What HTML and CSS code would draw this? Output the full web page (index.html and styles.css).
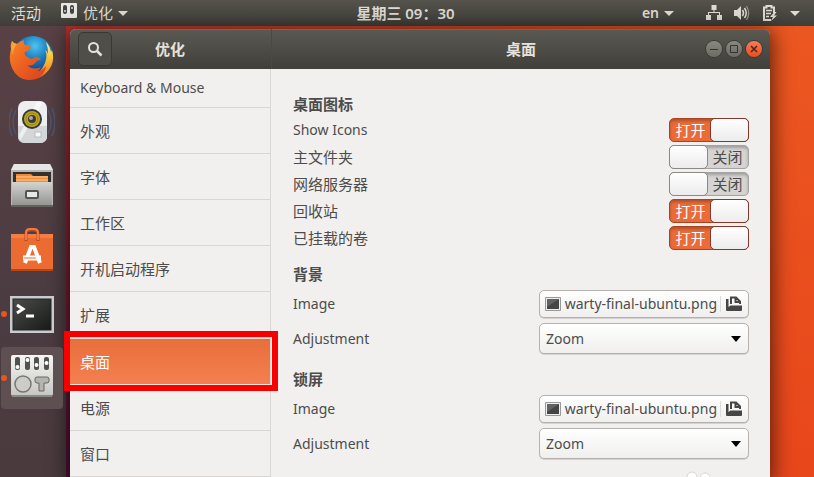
FILE: index.html
```html
<!DOCTYPE html>
<html lang="zh-CN">
<head>
    <meta charset="UTF-8">
    <meta name="viewport" content="width=device-width, initial-scale=1.0">
    <title>优化</title>
    <link rel="stylesheet" href="styles.css">
</head>
<body>
    <!-- top panel -->
    <header class="panel">
        <div class="panel-left">
            <button type="button" class="panel-item">活动</button>
            <button type="button" class="panel-item">
                <svg class="app-icon" width="17" height="17" viewBox="0 0 17 17">
                    <rect x="0" y="0" width="16" height="15" rx="1" fill="#e8e8e3"/>
                    <rect x="2" y="2" width="4" height="9" rx="2" fill="#444"/>
                    <rect x="9" y="2" width="4" height="9" rx="2" fill="#444"/>
                    <circle cx="4" cy="8" r="1" fill="#ddd"/>
                    <circle cx="11" cy="5" r="1" fill="#ddd"/>
                </svg>
                优化
                <span class="caret"></span>
            </button>
        </div>
        <button type="button" class="panel-item clock">星期三 09：30</button>
        <div class="panel-right">
            <button type="button" class="panel-item lang">en <span class="caret"></span></button>
            <button type="button" class="panel-item tray" aria-label="系统">
                <svg width="16" height="16" viewBox="0 0 16 16" fill="#dfdbd2">
                    <path d="M5.500 0h5v5H8.500v2H14v3h2v5h-5v-5h2V8H3v2h2v5H0v-5h2V7h5.500V5h-2z"/>
                </svg>
                <svg width="16" height="16" viewBox="0 0 16 16">
                    <path d="M0 5h3l4-4v14l-4-4H0z" fill="#dfdbd2"/>
                    <path d="M8.500 5q2 3 0 6M10.500 3q3.500 5 0 10" fill="none" stroke="#dfdbd2" stroke-width="1.500"/>
                    <path d="M12.500 1q4.500 7 0 14" fill="none" stroke="#97948c" stroke-width="1.200"/>
                </svg>
                <svg width="16" height="16" viewBox="0 0 16 16">
                    <path d="M9 15H2V2.500h2.500V1h5v1.500H12V8" fill="none" stroke="#dfdbd2" stroke-width="2"/>
                    <path d="M4 5.500h6M4 8.500h5M4 11.500h3" stroke="#dfdbd2" stroke-width="1.500"/>
                    <path d="M12.500 7L8 12h3l-2 4 6-5.500h-3L14.500 7z" fill="#dfdbd2"/>
                </svg>
                <span class="caret"></span>
            </button>
        </div>
    </header>

    <div class="desktop">
        <nav class="dock">
            <button type="button" class="dock-item" aria-label="Firefox">
                <svg width="46" height="46" viewBox="0 0 46 46">
                    <defs>
                        <radialGradient id="globe" cx=".55" cy=".25" r=".7"><stop offset="0" stop-color="#4fc4ef"/><stop offset=".5" stop-color="#1779bd"/><stop offset="1" stop-color="#103d7b"/></radialGradient>
                        <linearGradient id="fox" x1="0" y1="0" x2="1" y2="1"><stop offset="0" stop-color="#f58a25"/><stop offset=".5" stop-color="#ec5f21"/><stop offset="1" stop-color="#d9401c"/></linearGradient>
                        <linearGradient id="tail" x1="0" y1="0" x2="0" y2="1"><stop offset="0" stop-color="#fff0a0"/><stop offset=".4" stop-color="#fbc638"/><stop offset="1" stop-color="#ed6b20"/></linearGradient>
                    </defs>
                    <circle cx="24" cy="21" r="20" fill="url(#globe)"/>
                    <path d="M37 7q4 4 5 10l1-2q4 14-6 23-7 7-17 6 12-6 16-16 3-8 0-13 2 1 3 4 0-7-2-12z" fill="url(#tail)"/>
                    <path d="M3 6q2 3 5 3 3-3 7-4-1 3 1 5l5 1q2 2-1 4l-4 2q-1 2 1 4l5 3 5-2q4 0 5 3-4 0-5 2-4 5-9 3 6 6 14 2-1 3-4 4 5 0 9-5-2 14-18 14Q8 44 3 33-1 24 2 14q-1-4 1-8z" fill="url(#fox)"/>
                    <path d="M3 6q2 3 5 3-4 4-4 11-3-6-1-14z" fill="#f7a53a"/>
                </svg>
            </button>
            <button type="button" class="dock-item" aria-label="Rhythmbox">
                <svg width="46" height="46" viewBox="0 0 46 46">
                    <g fill="none" stroke="#4d5d83" stroke-width="1.500" opacity=".65"><path d="M7 11q-6 12 0 24M3 9q-6 14 0 28M39 11q6 12 0 24M43 9q6 14 0 28"/></g>
                    <rect x="9" y="2" width="29" height="42" rx="7" fill="#eceeef"/>
                    <path d="M9 27h29v10q0 7-7 7H16q-7 0-7-7z" fill="#d4d7da"/>
                    <path d="M10 36L28 3h6L11 42z" fill="#fff" opacity=".6"/>
                    <circle cx="23" cy="20" r="10" fill="#363736"/>
                    <circle cx="23" cy="20" r="8" fill="#c3a81d"/>
                    <circle cx="23" cy="20" r="6" fill="none" stroke="#927c17"/>
                    <circle cx="23" cy="20" r="4" fill="#393a3a"/>
                    <circle cx="22" cy="19" r="2" fill="#a9abaa"/>
                    <rect x="26" y="33" width="6" height="5" fill="#f8f8f8" stroke="#b9bcbf"/>
                </svg>
            </button>
            <button type="button" class="dock-item" aria-label="文件">
                <svg width="46" height="46" viewBox="0 -1 46 46">
                    <defs><linearGradient id="drawer" x2="0" y2="1"><stop offset="0" stop-color="#d3d3d1"/><stop offset="1" stop-color="#92928f"/></linearGradient></defs>
                    <path d="M5 0h36l3 6v36H2V6z" fill="#b9b9b7"/>
                    <path d="M5 0h36l3 6H2z" fill="#e6e6e4"/>
                    <rect x="4" y="8" width="38" height="11" fill="#36302c"/>
                    <path d="M7 10h15l2 2h15v7H7z" fill="#f08a3b"/>
                    <path d="M7 13h32M7 16h32" stroke="#ffd09a"/>
                    <path d="M3 18h40v24H3z" fill="url(#drawer)"/>
                    <path d="M2 42h42" stroke="#64605d" stroke-width="2"/>
                    <rect x="17" y="27" width="12" height="7" rx="1" fill="#e8e8e6" stroke="#555" stroke-width="2"/>
                </svg>
            </button>
            <button type="button" class="dock-item" aria-label="Ubuntu 软件">
                <svg width="46" height="46" viewBox="0 0 46 46">
                    <path d="M2 7h42v36H2z" fill="#ec6b31"/>
                    <path d="M2 7h42v4H2z" fill="#f37f45"/>
                    <path d="M2 43h42" stroke="#b64518" stroke-width="2"/>
                    <path d="M17 14V7q0-4 4-4h4q4 0 4 4v7" fill="none" stroke="#b94a20" stroke-width="3"/>
                    <path d="M17 13V6q0-4 4-4h4q4 0 4 4v7" fill="none" stroke="#f37b41" stroke-width="2"/>
                    <path d="M16 36l6-16h3l6 16" fill="none" stroke="#fff" stroke-width="4"/>
                    <path d="M14 31h18" stroke="#fff" stroke-width="5"/>
                    <path d="M15 31h12" stroke="#ec6b31"/>
                </svg>
            </button>
            <button type="button" class="dock-item running" aria-label="终端">
                <svg width="46" height="46" viewBox="0 0 46 46">
                    <defs><linearGradient id="screen" x2="1" y2="1"><stop offset="0" stop-color="#4c4d4b"/><stop offset="1" stop-color="#171918"/></linearGradient></defs>
                    <rect x="1" y="5" width="44" height="37" fill="#c9ccce"/>
                    <rect x="4" y="8" width="38" height="31" fill="url(#screen)" stroke="#222"/>
                    <path d="M8 14l6 4-6 4M17 25h8" fill="none" stroke="#fff" stroke-width="3"/>
                </svg>
            </button>
            <button type="button" class="dock-item running current" aria-label="优化">
                <svg width="46" height="46" viewBox="0 0 46 46">
                    <defs><linearGradient id="board" x2="0" y2="1"><stop offset="0" stop-color="#f6f6f3"/><stop offset="1" stop-color="#c6c6c2"/></linearGradient></defs>
                    <rect x="2" y="0" width="42" height="41" rx="2" fill="url(#board)"/>
                    <path d="M3 41h40" stroke="#8b8988" stroke-width="2"/>
                    <g fill="#50524f"><rect x="6" y="2" width="5" height="13" rx="2"/><rect x="16" y="2" width="5" height="13" rx="2"/><rect x="25" y="2" width="5" height="13" rx="2"/><rect x="35" y="2" width="5" height="13" rx="2"/></g>
                    <g fill="#fff"><circle cx="8.500" cy="12" r="2"/><circle cx="18.500" cy="5" r="2"/><circle cx="27.500" cy="10" r="2"/><circle cx="37.500" cy="8" r="2"/></g>
                    <circle cx="14" cy="29" r="8" fill="#ccccc8" stroke="#777875" stroke-width="1.500"/>
                    <path d="M28 22h10q2 0 2 2v2q0 2-2 2h-3v8h-5v-8h-2q-2 0-2-2v-2q0-2 2-2z" fill="#b4b5b2" stroke="#666764"/>
                </svg>
            </button>
        </nav>

        <main class="window">
            <header class="titlebar">
                <div class="title-side">
                    <button type="button" class="search" aria-label="搜索">
                        <svg width="16" height="16" viewBox="0 0 16 16" fill="none" stroke="#e5e2dc"><circle cx="6.500" cy="6.500" r="4.500" stroke-width="2"/><path d="M10 10l4.500 4.500" stroke-width="2.500"/></svg>
                    </button>
                    <h1>优化</h1>
                </div>
                <div class="title-main">
                    <h2>桌面</h2>
                    <div class="controls">
                        <button type="button" class="control" aria-label="最小化"><svg width="16" height="16" viewBox="0 0 16 16"><path d="M4 8.500h8" stroke="#34332e"/></svg></button>
                        <button type="button" class="control" aria-label="最大化"><svg width="16" height="16" viewBox="0 0 16 16"><path d="M4.500 4.500h7v7h-7z" fill="none" stroke="#34332e"/></svg></button>
                        <button type="button" class="control close" aria-label="关闭"><svg width="16" height="16" viewBox="0 0 16 16"><path d="M5 5l6 6M11 5l-6 6" stroke="#47251a" stroke-width="1.500"/></svg></button>
                    </div>
                </div>
            </header>

            <div class="window-body">
                <ul class="sidebar">
                    <li><a href="#">Keyboard &amp; Mouse</a></li>
                    <li><a href="#">外观</a></li>
                    <li><a href="#">字体</a></li>
                    <li><a href="#">工作区</a></li>
                    <li><a href="#">开机启动程序</a></li>
                    <li><a href="#">扩展</a></li>
                    <li class="selected"><a href="#">桌面</a></li>
                    <li><a href="#">电源</a></li>
                    <li><a href="#">窗口</a></li>
                </ul>

                <form class="settings">
                    <section>
                        <h3>桌面图标</h3>
                        <div class="row">
                            <label for="show-icons" class="latin">Show Icons</label>
                            <span class="switch"><input type="checkbox" id="show-icons" checked><span class="state">打开</span><span class="knob"></span></span>
                        </div>
                        <div class="row">
                            <label for="home">主文件夹</label>
                            <span class="switch"><input type="checkbox" id="home"><span class="state">关闭</span><span class="knob"></span></span>
                        </div>
                        <div class="row">
                            <label for="network">网络服务器</label>
                            <span class="switch"><input type="checkbox" id="network"><span class="state">关闭</span><span class="knob"></span></span>
                        </div>
                        <div class="row">
                            <label for="trash">回收站</label>
                            <span class="switch"><input type="checkbox" id="trash" checked><span class="state">打开</span><span class="knob"></span></span>
                        </div>
                        <div class="row">
                            <label for="volumes">已挂载的卷</label>
                            <span class="switch"><input type="checkbox" id="volumes" checked><span class="state">打开</span><span class="knob"></span></span>
                        </div>
                    </section>

                    <section>
                        <h3>背景</h3>
                        <div class="row tall">
                            <label for="bg-image" class="latin">Image</label>
                            <button type="button" class="file" id="bg-image">
                                <svg width="16" height="16" viewBox="0 0 16 16"><path d="M.500 1.500h15v13H.500z" fill="#eee" stroke="#999"/><path d="M2 3h12v10H2z" fill="#454545"/><path d="M2 3h12L2 11z" fill="#626262"/></svg>
                                <span class="file-name">warty-final-ubuntu.png</span>
                                <svg class="open" width="17" height="16" viewBox="0 0 17 16"><path d="M5 8V1.500h5l4 4V8M9.500 1v5H14" fill="none" stroke="#464646" stroke-width="2"/><path d="M0 3h2.500v8L4.500 9.500H16V14q0 1-1 1H1q-1 0-1-1z" fill="#464646"/></svg>
                            </button>
                        </div>
                        <div class="row tall">
                            <label for="bg-adjust" class="latin">Adjustment</label>
                            <select id="bg-adjust"><option>Zoom</option></select>
                        </div>
                    </section>

                    <section>
                        <h3>锁屏</h3>
                        <div class="row tall">
                            <label for="lock-image" class="latin">Image</label>
                            <button type="button" class="file" id="lock-image">
                                <svg width="16" height="16" viewBox="0 0 16 16"><path d="M.500 1.500h15v13H.500z" fill="#eee" stroke="#999"/><path d="M2 3h12v10H2z" fill="#454545"/><path d="M2 3h12L2 11z" fill="#626262"/></svg>
                                <span class="file-name">warty-final-ubuntu.png</span>
                                <svg class="open" width="17" height="16" viewBox="0 0 17 16"><path d="M5 8V1.500h5l4 4V8M9.500 1v5H14" fill="none" stroke="#464646" stroke-width="2"/><path d="M0 3h2.500v8L4.500 9.500H16V14q0 1-1 1H1q-1 0-1-1z" fill="#464646"/></svg>
                            </button>
                        </div>
                        <div class="row tall">
                            <label for="lock-adjust" class="latin">Adjustment</label>
                            <select id="lock-adjust"><option>Zoom</option></select>
                        </div>
                    </section>
                    <svg class="mark" width="28" height="6" viewBox="0 0 28 6"><g fill="#fff" stroke="#d8d6d4"><circle cx="7" cy="6" r="5"/><circle cx="20" cy="7" r="5"/></g></svg>
                </form>
            </div>
        </main>
    </div>
</body>
</html>
```
FILE: styles.css
```css
* { margin: 0; padding: 0; box-sizing: border-box; }
body { display: flex; flex-direction: column; height: 100vh; overflow: hidden; font-family: "Noto Sans", "Noto Sans CJK SC", sans-serif; font-size: 14px; line-height: 20px; color: #4c4c4c; background: #e64a19; }
button, select { font: inherit; color: inherit; border: none; background: none; }
svg { display: block; flex: none; }

/* panel */
.panel { display: grid; grid-template-columns: 1fr auto 1fr; height: 26px; padding: 0 14px 0 11px; color: #dfdbd2; background: linear-gradient(#55534b, #3e3d38); }
.panel-left, .panel-right { display: flex; }
.panel-left { gap: 20px; font-size: 15px; }
.panel-right { justify-content: flex-end; gap: 32px; }
.panel-item { display: flex; align-items: center; gap: 5px; }
.app-icon { align-self: flex-start; margin-top: 3px; }
.clock, .lang { font-weight: 600; }
.panel .clock { font-size: 15px; }
.panel .tray { gap: 12px; }
.caret { width: 0; height: 0; border: 5px solid transparent; border-top-color: #dfdbd2; border-bottom: none; }

/* desktop */
.desktop { flex: 1; display: flex; min-height: 0; background: linear-gradient(transparent, #4d1038) no-repeat 0 0 / 90px 100%, linear-gradient(rgba(240, 95, 35, 0.3), rgba(230, 50, 20, 0.4)), linear-gradient(90deg, #7d1440, #a3202e 10%, #b83420 50%, #e95420 94%); }
.dock { width: 66px; flex: none; padding-top: 1px; background: linear-gradient(#594145, #4b3c41 60%, #4a3a3e); }
.dock-item { position: relative; display: flex; align-items: center; justify-content: center; width: 62px; height: 62px; margin: 0 1px 2px; border-radius: 4px; }
.current { background: #5d4f52; }
.running::before { content: ""; position: absolute; left: 0; top: 28px; width: 6px; height: 6px; border-radius: 50%; background: #e95420; }

/* window */
.window { flex: 1; display: flex; flex-direction: column; min-width: 0; margin: 3px 44px 0 4px; border-radius: 6px 6px 0 0; background: #f2f0ee; box-shadow: 0 4px 20px 3px rgba(0, 0, 0, 0.6); }
.titlebar { display: flex; height: 40px; flex: none; border-radius: 6px 6px 0 0; color: #e5e2dc; background: linear-gradient(#5b5952, #403f3a); box-shadow: inset 0 1px #6a6860; }
.titlebar h1, .titlebar h2 { font-size: 15px; font-weight: 700; text-align: center; }
.titlebar h1 { flex: 1; }
.title-side { display: flex; align-items: center; width: 202px; padding: 0 43px 0 8px; border-right: 1px solid #4a4943; }
.search { display: flex; align-items: center; justify-content: center; width: 34px; height: 34px; border: 1px solid #393833; border-radius: 5px; background: #4f4e48; }
.title-main { flex: 1; display: grid; grid-template-columns: 1fr auto 1fr; align-items: center; padding: 0 8px; }
.title-main h2 { grid-column: 2; }
.controls { display: flex; justify-content: flex-end; gap: 4px; }
.control { width: 16px; height: 16px; border-radius: 50%; background: linear-gradient(#8a8880, #6c6b64); box-shadow: 0 0 0 1px #3b3a35; }
.close { background: linear-gradient(#f67d55, #e84e1c); }
.window-body { flex: 1; display: flex; min-height: 0; }

.sidebar { width: 201px; flex: none; list-style: none; border-right: 1px solid #dad7d4; font-size: 15px; }
.sidebar li { position: relative; border-bottom: 1px solid #d9d6d3; }
.sidebar a { display: flex; align-items: center; height: 45px; padding: 0 10px; color: inherit; text-decoration: none; }
.sidebar li:first-child a { height: 38px; font-size: 14px; }
.sidebar .selected { border-top: 1px solid #fbe3d9; border-color: #fbe3d9; }
.sidebar .selected a { color: #fff; background: linear-gradient(#e86f3b, #f47f50); }
.selected::after { content: ""; position: absolute; inset: -8px -8px -7px -6px; border: 6px solid #f60000; pointer-events: none; }

/* settings */
.settings { position: relative; flex: 1; min-width: 0; padding: 23px 21px 0 22px; }
.settings section { margin-bottom: 11px; }
.settings section:nth-of-type(3) { margin-bottom: 0; }
.settings h3 { font-size: 15px; line-height: 24px; font-weight: 700; }
.row { display: flex; align-items: center; justify-content: space-between; height: 27px; font-size: 15px; }
.tall { height: 35px; }
.row .latin { font-size: 14px; }
.switch { position: relative; display: flex; flex-direction: row-reverse; width: 80px; height: 24px; border: 1px solid #a5a4a2; border-radius: 5px; background: #d5d4d2; box-shadow: inset 0 2px 3px rgba(0, 0, 0, 0.25); }
.switch input { position: absolute; inset: 0; opacity: 0; }
.state { flex: 1; line-height: 22px; text-align: center; }
.knob { width: 39px; margin: -1px; border: 1px solid #8b8986; border-radius: 5px; background: linear-gradient(#fff, #ececec); }
.switch:has(:checked) { flex-direction: row; color: #fff; border-color: #a8451e; background: #eb6b38; }
.switch :checked ~ .knob { border-color: #82382c; }
.file, select { width: 210px; border: 1px solid #b4b1ae; border-radius: 5px; background-color: #f8f7f6; background-image: linear-gradient(#fff, #f0efee); box-shadow: 0 1px #d5d3d1; }
.file { display: flex; align-items: center; height: 28px; padding: 0 5px; }
.file-name { flex: 1; padding-right: 3px; font-size: 14px; text-align: right; white-space: nowrap; }
.open { box-sizing: content-box; padding-left: 5px; border-left: 1px solid #dddbd9; }
select { appearance: none; height: 31px; padding: 0 6px; font-size: 14px; background-image: url("data:image/svg+xml,%3Csvg xmlns='http://www.w3.org/2000/svg' viewBox='0 0 10 6'%3E%3Cpath d='M0 0h10L5 6z'/%3E%3C/svg%3E"), linear-gradient(#fff, #f0efee); background-repeat: no-repeat; background-position: right 7px center, 0 0; background-size: 10px 6px, auto; }
.mark { position: absolute; right: 57px; bottom: 0; }
```
